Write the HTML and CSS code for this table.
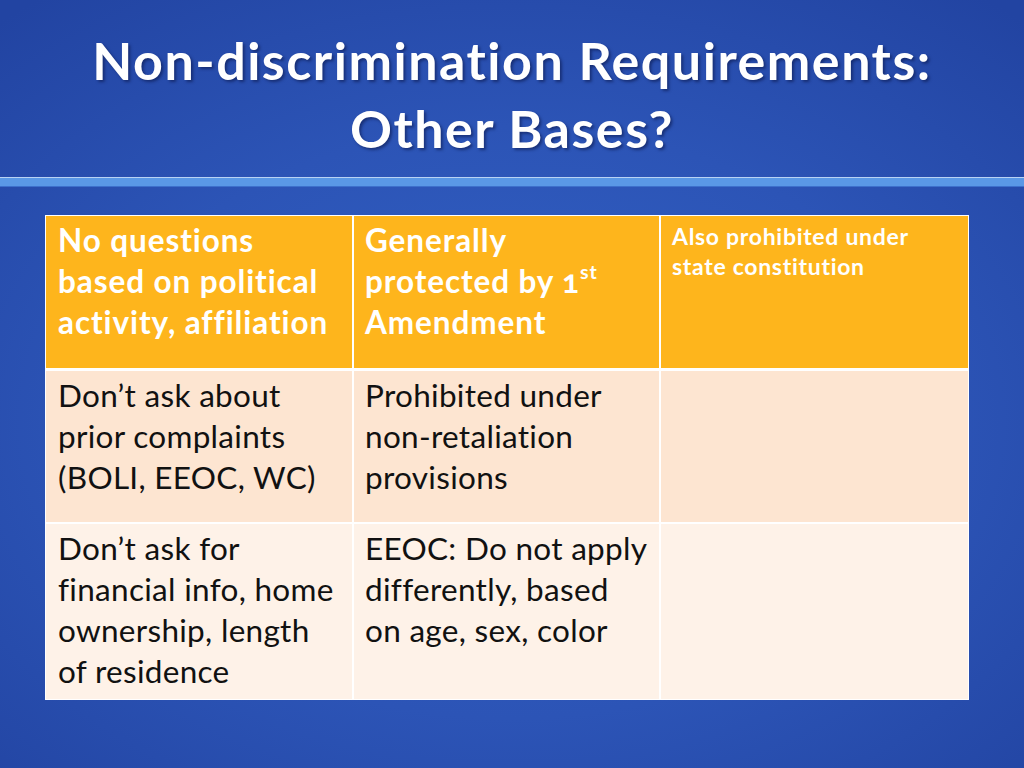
FILE: index.html
```html
<!DOCTYPE html>
<html>
<head>
<meta charset="utf-8">
<link rel="stylesheet" href="styles.css">
</head>
<body>
<div class="slide">
  <header class="title-area">
    <h1 class="title">Non-discrimination Requirements:<br>Other Bases?</h1>
  </header>
  <div class="rule"></div>
  <div class="table">
    <div class="row head">
      <div class="cell">No questions<br>based on political<br>activity, affiliation</div>
      <div class="cell">Generally<br>protected by <span class="onum">1</span><sup>st</sup><br>Amendment</div>
      <div class="cell small">Also prohibited under<br>state constitution</div>
    </div>
    <div class="row r2">
      <div class="cell">Don’t ask about<br>prior complaints<br>(BOLI, EEOC, WC)</div>
      <div class="cell">Prohibited under<br>non-retaliation<br>provisions</div>
      <div class="cell"></div>
    </div>
    <div class="row r3">
      <div class="cell">Don’t ask for<br>financial info, home<br>ownership, length<br>of residence</div>
      <div class="cell">EEOC: Do not apply<br>differently, based<br>on age, sex, color</div>
      <div class="cell"></div>
    </div>
  </div>
</div>
</body>
</html>
```
FILE: styles.css
```css
html, body {
  margin: 0;
  padding: 0;
}
body {
  width: 1024px;
  height: 768px;
  overflow: hidden;
  font-family: "Lato", "Open Sans", sans-serif;
}
.slide {
  width: 1024px;
  height: 768px;
  background: radial-gradient(ellipse 75% 70% at 50% 55%, #3262c6 0%, #2c54b6 55%, #2244a2 100%);
  display: flex;
  flex-direction: column;
}
.title-area {
  height: 177px;
  box-sizing: border-box;
  padding-top: 26px;
}
.title {
  margin: 0;
  text-align: center;
  color: #ffffff;
  font-size: 52px;
  line-height: 68px;
  font-weight: 700;
  letter-spacing: 1.5px;
  font-variant-ligatures: no-common-ligatures;
  text-shadow: 2px 2px 3px rgba(10, 20, 70, 0.55);
}
.rule {
  height: 8px;
  border-top: 1px solid #b9d3f4;
  border-bottom: 1px solid #3d70cc;
  background: #5a98e6;
}
.table {
  margin: 28px 0 0 45px;
  width: 922px;
  border: 1px solid #ffffff;
  display: flex;
  flex-direction: column;
}
.row {
  display: grid;
  grid-template-columns: 306px 307px 1fr;
}
.cell {
  box-sizing: border-box;
  padding: 4px 4px 0 11px;
  font-size: 31.5px;
  line-height: 41px;
  letter-spacing: 0.3px;
  color: #111;
  border-left: 2px solid #ffffff;
  white-space: nowrap;
}
.cell:first-child {
  border-left: none;
  padding-left: 12px;
}
.head {
  height: 152px;
  background: #feb51c;
  border-bottom: 3px solid #ffffff;
}
.head .cell {
  color: #ffffff;
  font-weight: 700;
  letter-spacing: 0.9px;
}
.head .cell.small {
  font-size: 23px;
  line-height: 30px;
  padding-top: 5px;
  letter-spacing: 0.7px;
}
.onum {
  font-variant-numeric: oldstyle-nums;
}
sup {
  font-size: 62%;
  line-height: 0;
  vertical-align: 0.72em;
}
.r2 {
  height: 151px;
  background: #fde5d1;
  border-bottom: 2px solid #ffffff;
}
.r3 {
  height: 175px;
  background: #fef2e8;
}
```
